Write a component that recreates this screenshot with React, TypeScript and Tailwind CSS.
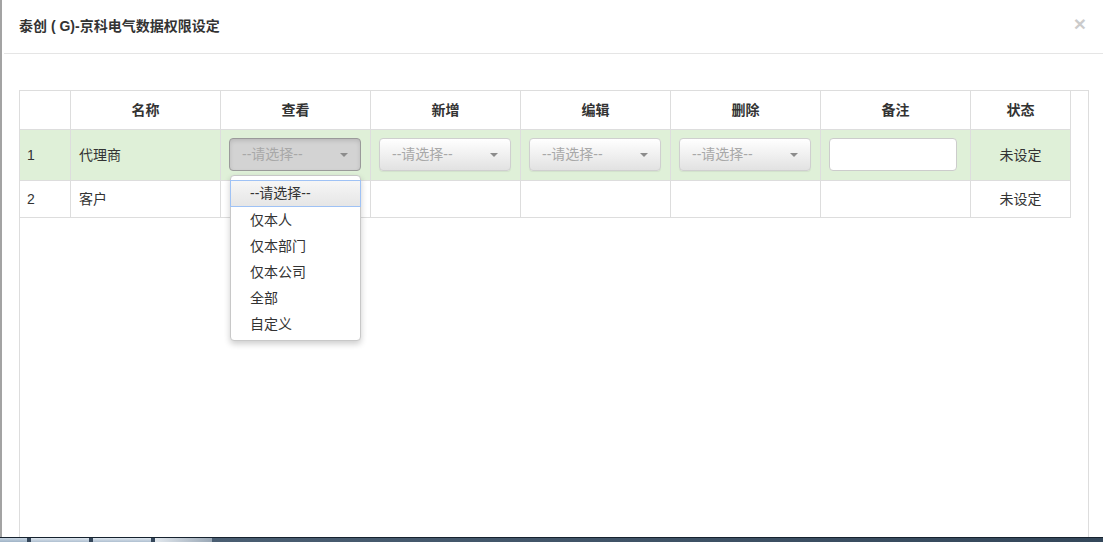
import React from "react";

const cols = [51, 150, 150, 150, 150, 150, 150, 100];
const heads = ["", "名称", "查看", "新增", "编辑", "删除", "备注", "状态"];

function Caret({ color = "#8a8a8a" }: { color?: string }) {
  return (
    <span
      className="block w-0 h-0 border-l-[4px] border-r-[4px] border-t-[4px] border-l-transparent border-r-transparent"
      style={{ borderTopColor: color }}
    />
  );
}

function Select({ active = false }: { active?: boolean }) {
  return (
    <div
      className={
        active
          ? "w-[132px] h-[33px] rounded-[4px] border border-[#9a9a9a] bg-[#d3d3d3] shadow-[inset_0_2px_4px_rgba(0,0,0,0.12)] flex items-center justify-between pl-[12px] pr-[12px] text-[#a8a8a8]"
          : "w-[132px] h-[33px] rounded-[4px] border border-[#cfcfcf] bg-gradient-to-b from-[#ffffff] to-[#e2e2e2] shadow-[0_1px_1px_rgba(0,0,0,0.06)] flex items-center justify-between pl-[12px] pr-[12px] text-[#a8a8a8]"
      }
    >
      <span className="text-[14px]">--请选择--</span>
      <Caret color="#8c8c8c" />
    </div>
  );
}

function Dropdown() {
  const opts = ["仅本人", "仅本部门", "仅本公司", "全部", "自定义"];
  return (
    <div className="absolute left-[1px] top-[37px] w-[131px] h-[166px] bg-white border border-[#c8c8c8] rounded-[4px] shadow-[0_3px_6px_rgba(0,0,0,0.2)] pt-[4px] z-10">
      <div className="h-[27px] mx-[-1px] border border-[#9fc2f5] bg-gradient-to-b from-[#f6f6f6] to-[#e6e6e6] flex items-center pl-[19px] text-[14px] text-[#333]">
        --请选择--
      </div>
      {opts.map((o) => (
        <div key={o} className="h-[26px] flex items-center pl-[19px] text-[14px] text-[#333]">
          {o}
        </div>
      ))}
    </div>
  );
}

export default function App() {
  return (
    <div className="w-[1103px] h-[542px] overflow-hidden bg-white flex flex-col font-['Liberation_Sans','Noto_Sans_CJK_SC',sans-serif] text-[#333]">
      <div className="flex-1 flex flex-col border-l-2 border-[#a3a3a3] min-h-0">
        <div className="relative h-[54px] ml-[2px] border-b border-[#e5e5e5] flex items-center pl-[15px] shrink-0">
          <h4 className="text-[14px] font-bold text-[#333]">泰创 ( G)-京科电气数据权限设定</h4>
          <span className="absolute right-[17px] top-[13px] text-[21px] leading-[21px] font-bold text-black opacity-20">×</span>
        </div>
        <div className="flex-1 min-h-0 pt-[36px] pl-[17px] pr-[14px]">
          <div className="h-full border border-b-0 border-[#dddddd] w-[1070px]">
            <table className="border-collapse text-[14px] table-fixed w-[1051px] -mt-px -ml-px">
              <colgroup>
                {cols.map((w, i) => (
                  <col key={i} style={{ width: w }} />
                ))}
              </colgroup>
              <thead>
                <tr className="h-[39px]">
                  {heads.map((h, i) => (
                    <th key={i} className="border border-[#dddddd] font-bold text-center text-[#333] p-0">
                      {h}
                    </th>
                  ))}
                </tr>
              </thead>
              <tbody>
                <tr className="h-[51px] bg-[#dff0d8]">
                  <td className="border border-[#dddddd] pl-[7px]">1</td>
                  <td className="border border-[#dddddd] pl-[8px]">代理商</td>
                  <td className="border border-[#dddddd] pl-[8px]">
                    <div className="relative w-[132px] -mt-px">
                      <Select active />
                      <Dropdown />
                    </div>
                  </td>
                  <td className="border border-[#dddddd] pl-[8px]">
                    <div className="-mt-px"><Select /></div>
                  </td>
                  <td className="border border-[#dddddd] pl-[8px]">
                    <div className="-mt-px"><Select /></div>
                  </td>
                  <td className="border border-[#dddddd] pl-[8px]">
                    <div className="-mt-px"><Select /></div>
                  </td>
                  <td className="border border-[#dddddd] pl-[8px]">
                    <div className="-mt-px w-[128px] h-[33px] rounded-[4px] border border-[#cccccc] bg-white" />
                  </td>
                  <td className="border border-[#dddddd] text-center">未设定</td>
                </tr>
                <tr className="h-[37px]">
                  <td className="border border-[#dddddd] pl-[7px]">2</td>
                  <td className="border border-[#dddddd] pl-[8px]">客户</td>
                  <td className="border border-[#dddddd]"></td>
                  <td className="border border-[#dddddd]"></td>
                  <td className="border border-[#dddddd]"></td>
                  <td className="border border-[#dddddd]"></td>
                  <td className="border border-[#dddddd]"></td>
                  <td className="border border-[#dddddd] text-center">未设定</td>
                </tr>
              </tbody>
            </table>
          </div>
        </div>
      </div>
      <div className="h-px bg-[#16222e] shrink-0" />
      <div className="h-[4px] flex shrink-0 bg-gradient-to-r from-[#3b4d5e] to-[#2f3f4f]">
        <div className="w-[27px] bg-gradient-to-b from-[#c9d6e3] to-[#9fb3c6]" />
        <div className="w-[4px] bg-[#34465a]" />
        <div className="w-[58px] bg-gradient-to-b from-[#dfe7ef] to-[#aebfd0]" />
        <div className="w-[4px] bg-[#34465a]" />
        <div className="w-[58px] bg-gradient-to-b from-[#dfe7ef] to-[#aebfd0]" />
        <div className="w-[4px] bg-[#34465a]" />
        <div className="w-[57px] bg-gradient-to-r from-[#e2e8ee] to-[#9aa8b6]" />
        <div className="flex-1 bg-gradient-to-r from-[#4a5e72] to-[#34475a]" />
      </div>
    </div>
  );
}
